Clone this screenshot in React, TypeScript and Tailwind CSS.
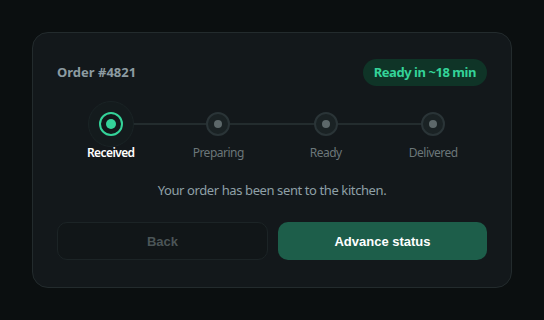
import React, { useState } from "react";

const steps = ["Received", "Preparing", "Ready", "Delivered"];

const messages = [
  "Your order has been sent to the kitchen.",
  "The kitchen is preparing your order.",
  "Your order is ready for pickup.",
  "Your order has been delivered.",
];

function StepDot({ state }: { state: "done" | "active" | "todo" }) {
  if (state === "active") {
    return (
      <div className="relative flex h-6 w-6 items-center justify-center">
        <div className="absolute left-1/2 top-1/2 h-[46px] w-[46px] -translate-x-1/2 -translate-y-1/2 rounded-full border border-[#1a2325] bg-[#141b1d]" />
        <div className="relative flex h-6 w-6 items-center justify-center rounded-full border-2 border-[#34d399] bg-[#12181a]">
          <div className="h-[10px] w-[10px] rounded-full bg-[#34d399]" />
        </div>
      </div>
    );
  }
  return (
    <div className="relative flex h-6 w-6 items-center justify-center rounded-full border-2 border-[#2a3437] bg-[#1a2224]">
      <div className="h-[8px] w-[8px] rounded-full bg-[#5d686a]" />
    </div>
  );
}

export default function App() {
  const [current, setCurrent] = useState(0);

  return (
    <div className="flex h-[320px] w-[544px] items-center justify-center bg-[#0b0f10] font-['Noto_Sans',sans-serif]">
      <div className="w-[480px] rounded-2xl border border-[#232b2d] bg-[#13181b] px-6 pb-[27px] pt-[26px]">
        <div className="flex items-center justify-between">
          <span className="text-[13px] font-bold text-[#8c9ba1]">Order #4821</span>
          <span className="rounded-full bg-[#0f3427] px-[11px] py-[4px] text-[13px] font-bold tracking-[-0.45px] text-[#34d399]">
            Ready in ~18 min
          </span>
        </div>

        <div className="relative mt-[26px] grid grid-cols-4">
          <div className="absolute left-[54px] right-[54px] top-[11px] h-[2px] bg-[#232c2e]" />
          {steps.map((s, i) => (
            <div key={s} className="relative flex flex-col items-center">
              <StepDot state={i < current ? "done" : i === current ? "active" : "todo"} />
              <span
                className={`mt-[9px] text-[12px] leading-4 ${
                  i === current
                    ? "font-semibold tracking-[-0.6px] text-white"
                    : "tracking-[-0.5px] text-[#6b7679]"
                }`}
              >
                {s}
              </span>
            </div>
          ))}
        </div>

        <p className="mt-[19px] text-center text-[13px] leading-5 tracking-[-0.4px] text-[#8fa0a7]">
          {messages[current]}
        </p>

        <div className="mt-[22px] flex gap-[10px]">
          <button
            onClick={() => setCurrent((c) => Math.max(0, c - 1))}
            className="h-[38px] flex-1 rounded-[10px] border border-[#1c2426] bg-[#111618] font-['Liberation_Sans',sans-serif] text-[13px] font-bold text-[#4b5557]"
          >
            Back
          </button>
          <button
            onClick={() => setCurrent((c) => Math.min(steps.length - 1, c + 1))}
            className="h-[38px] flex-1 rounded-[10px] bg-[#1d5e4a] font-['Liberation_Sans',sans-serif] text-[13px] font-bold text-white"
          >
            Advance status
          </button>
        </div>
      </div>
    </div>
  );
}
